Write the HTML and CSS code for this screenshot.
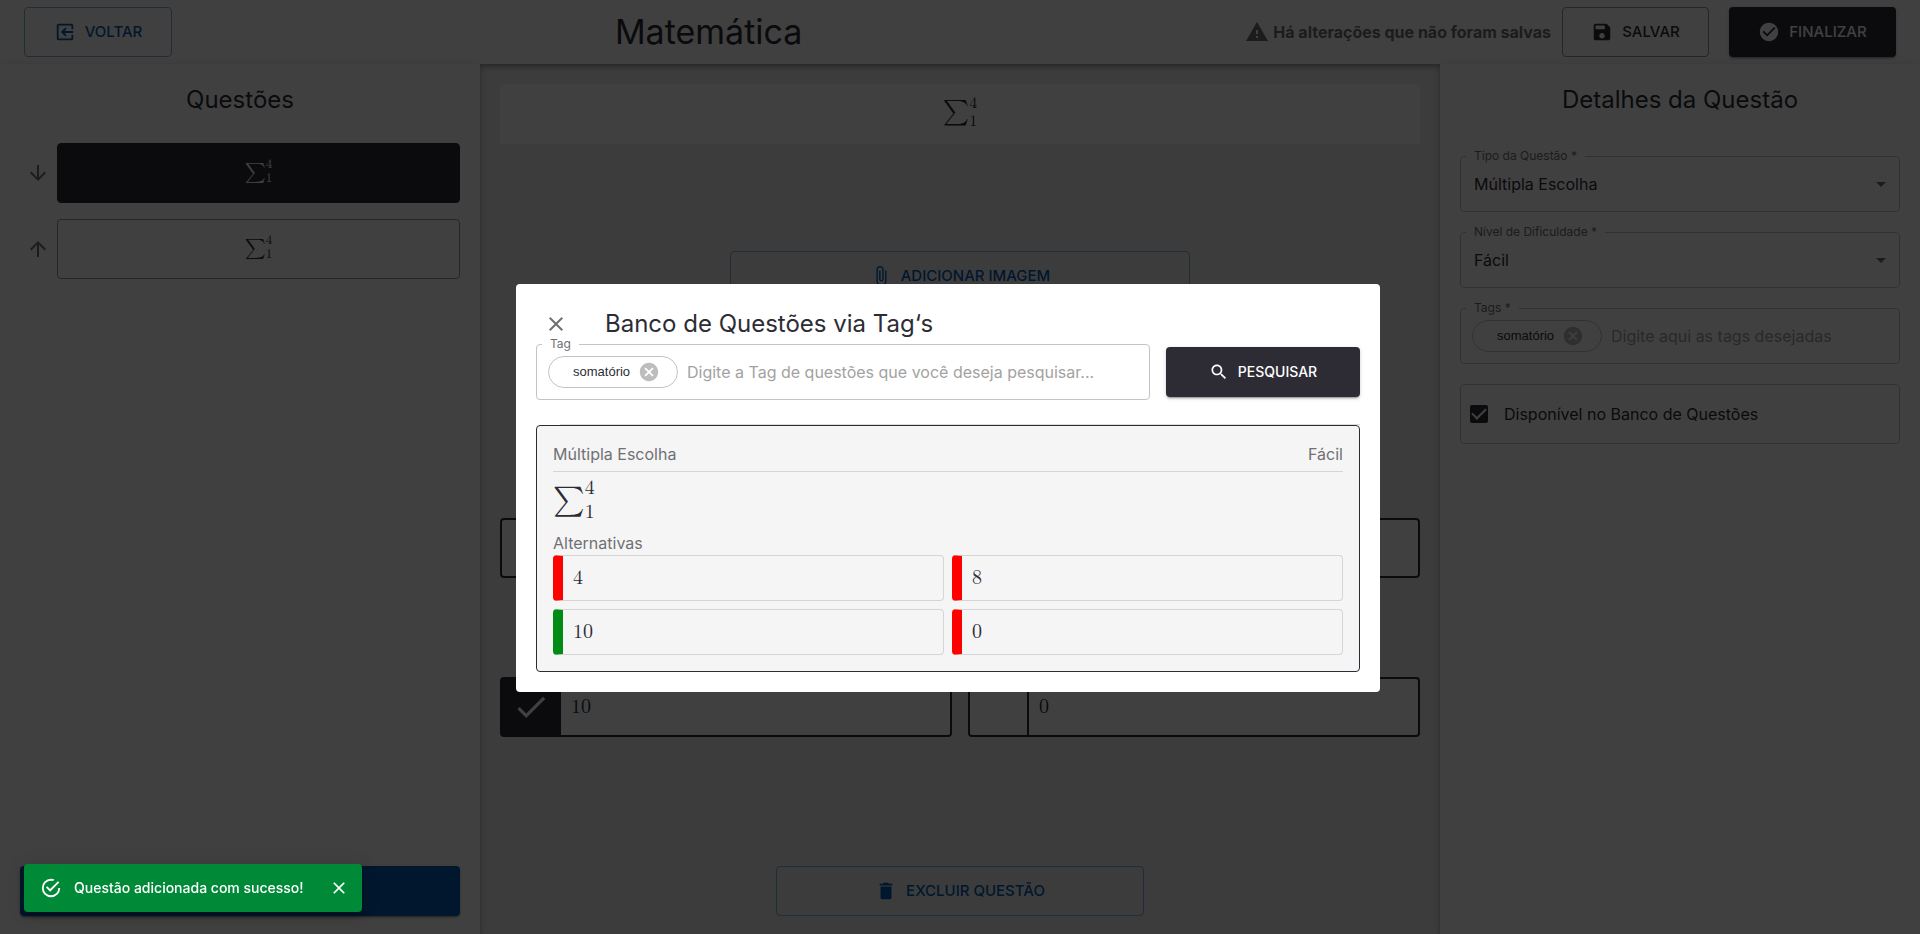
FILE: index.html
```html
<!DOCTYPE html>
<html lang="pt-BR">
<head>
<meta charset="utf-8">
<meta name="viewport" content="width=device-width, initial-scale=1">
<title>Matemática</title>
<link rel="stylesheet" href="styles.css">
</head>
<body>
<div class="app">
  <header class="topbar">
    <button type="button" class="btn btn-outline-blue btn-back">
      <svg class="icon" viewBox="0 0 24 24"><path transform="matrix(-1 0 0 1 24 0)" d="M10.090 15.590 11.500 17l5-5-5-5-1.410 1.410L12.670 11H3v2h9.670l-2.580 2.590zM19 3H5a2 2 0 0 0-2 2v4h2V5h14v14H5v-4H3v4a2 2 0 0 0 2 2h14a2 2 0 0 0 2-2V5a2 2 0 0 0-2-2z"/></svg>
      VOLTAR
    </button>
    <h1 class="topbar-title">Matemática</h1>
    <div class="topbar-actions">
      <p class="unsaved">
        <svg class="icon icon-lg" viewBox="0 0 24 24"><path d="M1 21h22L12 2 1 21zm12-3h-2v-2h2v2zm0-4h-2v-4h2v4z"/></svg>
        Há alterações que não foram salvas
      </p>
      <button type="button" class="btn btn-outline-dark btn-save">
        <svg class="icon" viewBox="0 0 24 24"><path d="M17 3H5c-1.110 0-2 .9-2 2v14c0 1.100.89 2 2 2h14c1.100 0 2-.9 2-2V7l-4-4zm-5 16c-1.660 0-3-1.340-3-3s1.340-3 3-3 3 1.340 3 3-1.340 3-3 3zm3-10H5V5h10v4z"/></svg>
        SALVAR
      </button>
      <button type="button" class="btn btn-dark btn-finish">
        <svg class="icon" viewBox="0 0 24 24"><path d="M12 2C6.480 2 2 6.480 2 12s4.480 10 10 10 10-4.480 10-10S17.520 2 12 2zm-2 15-5-5 1.410-1.410L10 14.170l7.590-7.590L19 8l-9 9z"/></svg>
        FINALIZAR
      </button>
    </div>
  </header>

  <div class="columns">
    <aside class="panel questions">
      <h2 class="panel-title">Questões</h2>
      <ul class="question-list">
        <li class="question-row">
          <button type="button" class="move" aria-label="Mover para baixo"><svg class="icon icon-lg" viewBox="0 0 24 24"><path d="m20 12-1.410-1.410L13 16.170V4h-2v12.170l-5.580-5.590L4 12l8 8 8-8z"/></svg></button>
          <button type="button" class="question-card question-card-active"><span class="sum sum-sm">∑<span class="limits"><span>4</span><span>1</span></span></span></button>
        </li>
        <li class="question-row">
          <button type="button" class="move" aria-label="Mover para cima"><svg class="icon icon-lg" viewBox="0 0 24 24"><path d="m4 12 1.410 1.410L11 7.830V20h2V7.830l5.580 5.590L20 12l-8-8-8 8z"/></svg></button>
          <button type="button" class="question-card"><span class="sum sum-sm">∑<span class="limits"><span>4</span><span>1</span></span></span></button>
        </li>
      </ul>
      <button type="button" class="btn btn-blue btn-add" aria-label="Adicionar questão"></button>
    </aside>

    <main class="editor">
      <div class="statement"><span class="sum sum-md">∑<span class="limits"><span>4</span><span>1</span></span></span></div>
      <div class="editor-image">
        <button type="button" class="btn btn-outline-blue btn-image">
          <svg class="icon" viewBox="0 0 24 24"><path d="M16.500 6v11.500c0 2.210-1.790 4-4 4s-4-1.790-4-4V5c0-1.380 1.120-2.500 2.500-2.500s2.500 1.120 2.500 2.500v10.500c0 .55-.45 1-1 1s-1-.45-1-1V6H10v9.500c0 1.380 1.120 2.500 2.500 2.500s2.500-1.120 2.500-2.500V5c0-2.210-1.790-4-4-4S7 2.790 7 5v12.500c0 3.040 2.460 5.500 5.500 5.500s5.500-2.460 5.500-5.500V6h-1.500z"/></svg>
          ADICIONAR IMAGEM
        </button>
      </div>
      <div class="choices">
        <div class="choice"><span class="choice-mark"></span><span class="choice-value">4</span></div>
        <div class="choice"><span class="choice-mark"></span><span class="choice-value">8</span></div>
        <div class="choice choice-right"><span class="choice-mark"><svg class="icon icon-xl" viewBox="0 0 24 24"><path d="M9 16.170 4.830 12l-1.420 1.410L9 19 21 7l-1.410-1.410L9 16.170z"/></svg></span><span class="choice-value">10</span></div>
        <div class="choice"><span class="choice-mark"></span><span class="choice-value">0</span></div>
      </div>
      <button type="button" class="btn btn-outline-blue btn-delete">
        <svg class="icon" viewBox="0 0 24 24"><path d="M6 19c0 1.100.9 2 2 2h8c1.100 0 2-.9 2-2V7H6v12zM19 4h-3.500l-1-1h-5l-1 1H5v2h14V4z"/></svg>
        EXCLUIR QUESTÃO
      </button>
    </main>

    <aside class="panel details">
      <h2 class="panel-title">Detalhes da Questão</h2>
      <div class="fields">
        <fieldset class="field">
          <legend><label for="tipo">Tipo da Questão *</label></legend>
          <select id="tipo" class="select"><option>Múltipla Escolha</option></select>
          <svg class="icon icon-lg select-arrow" viewBox="0 0 24 24"><path d="m7 10 5 5 5-5z"/></svg>
        </fieldset>
        <fieldset class="field">
          <legend><label for="nivel">Nível de Dificuldade *</label></legend>
          <select id="nivel" class="select"><option>Fácil</option></select>
          <svg class="icon icon-lg select-arrow" viewBox="0 0 24 24"><path d="m7 10 5 5 5-5z"/></svg>
        </fieldset>
        <fieldset class="field field-tags">
          <legend><label for="tags">Tags *</label></legend>
          <span class="chip">somatório<svg class="icon chip-x" viewBox="0 0 24 24"><path d="M12 2C6.470 2 2 6.470 2 12s4.470 10 10 10 10-4.470 10-10S17.530 2 12 2zm5 13.590L15.590 17 12 13.410 8.410 17 7 15.590 10.590 12 7 8.410 8.410 7 12 10.590 15.590 7 17 8.410 13.410 12 17 15.590z"/></svg></span>
          <input id="tags" class="input" type="text" placeholder="Digite aqui as tags desejadas">
        </fieldset>
        <label class="bank"><input type="checkbox" class="check" checked><span>Disponível no Banco de Questões</span></label>
      </div>
    </aside>
  </div>
</div>

<div class="backdrop">
  <section class="dialog" role="dialog" aria-modal="true" aria-labelledby="dialog-title">
    <div class="dialog-head">
      <button type="button" class="close" aria-label="Fechar"><svg class="icon icon-lg" viewBox="0 0 24 24"><path d="M19 6.410 17.590 5 12 10.590 6.410 5 5 6.410 10.590 12 5 17.590 6.410 19 12 13.410 17.590 19 19 17.590 13.410 12z"/></svg></button>
      <h2 id="dialog-title" class="dialog-title">Banco de Questões via Tag‘s</h2>
    </div>
    <form class="search">
      <fieldset class="field field-tags">
        <legend><label for="busca">Tag</label></legend>
        <span class="chip">somatório<svg class="icon chip-x" viewBox="0 0 24 24"><path d="M12 2C6.470 2 2 6.470 2 12s4.470 10 10 10 10-4.470 10-10S17.530 2 12 2zm5 13.590L15.590 17 12 13.410 8.410 17 7 15.590 10.590 12 7 8.410 8.410 7 12 10.590 15.590 7 17 8.410 13.410 12 17 15.590z"/></svg></span>
        <input id="busca" class="input" type="text" placeholder="Digite a Tag de questões que você deseja pesquisar...">
      </fieldset>
      <button type="button" class="btn btn-dark btn-search">
        <svg class="icon icon-sm" viewBox="0 0 24 24"><path d="M15.500 14h-.79l-.28-.27C15.410 12.590 16 11.110 16 9.500 16 5.910 13.090 3 9.500 3S3 5.910 3 9.500 5.910 16 9.500 16c1.610 0 3.090-.59 4.230-1.570l.27.28v.79l5 4.990L20.490 19l-4.990-5zm-6 0C7.010 14 5 11.990 5 9.500S7.010 5 9.500 5 14 7.010 14 9.500 11.990 14 9.500 14z"/></svg>
        PESQUISAR
      </button>
    </form>
    <hr class="rule">
    <article class="result">
      <div class="result-head"><span>Múltipla Escolha</span><span>Fácil</span></div>
      <div class="result-statement"><span class="sum sum-lg">∑<span class="limits"><span>4</span><span>1</span></span></span></div>
      <p class="result-label">Alternativas</p>
      <ul class="answers">
        <li class="answer">4</li>
        <li class="answer">8</li>
        <li class="answer answer-right">10</li>
        <li class="answer">0</li>
      </ul>
    </article>
  </section>
</div>

<div class="toast" role="alert">
  <svg class="icon icon-toast" viewBox="0 0 24 24"><path d="M20 12a8 8 0 0 1-8 8 8 8 0 0 1-8-8 8 8 0 0 1 8-8c.76 0 1.500.11 2.200.31l1.570-1.570A9.822 9.822 0 0 0 12 2 10 10 0 0 0 2 12a10 10 0 0 0 10 10 10 10 0 0 0 10-10M7.910 10.080 6.500 11.500 11 16 21 6l-1.410-1.420L11 13.170z"/></svg>
  <span class="toast-text">Questão adicionada com sucesso!</span>
  <button type="button" class="toast-close" aria-label="Fechar aviso"><svg class="icon icon-sm" viewBox="0 0 24 24"><path d="M19 6.410 17.590 5 12 10.590 6.410 5 5 6.410 10.590 12 5 17.590 6.410 19 12 13.410 17.590 19 19 17.590 13.410 12z"/></svg></button>
</div>
</body>
</html>
```
FILE: styles.css
```css
:root {
  --ink: #2d2c35;
  --blue: #005cb2;
  --blue-line: #80aed6;
  --muted: #707074;
  --line: #c4c4c4;
  --math: "Latin Modern Math", "Liberation Serif", serif;
}

* { box-sizing: border-box; }

body {
  margin: 0;
  font-family: Inter, sans-serif;
  font-size: 16px;
  line-height: 24px;
  color: var(--ink);
  background: #fff;
}

h1, h2, p, ul { margin: 0; padding: 0; font-weight: 400; list-style: none; }

button, input, select { font: inherit; color: inherit; }

.icon { width: 22px; height: 22px; fill: currentColor; flex: none; }
.icon-sm { width: 20px; height: 20px; }
.icon-lg { width: 24px; height: 24px; }
.icon-xl { width: 38px; height: 38px; }

.app { display: flex; flex-direction: column; min-height: 100vh; }

/* Buttons */
.btn {
  display: flex;
  align-items: center;
  justify-content: center;
  gap: 9px;
  height: 50px;
  padding: 0 24px;
  border: 1px solid transparent;
  border-radius: 4px;
  background: transparent;
  font-size: 15px;
  font-weight: 500;
}
.btn-outline-blue { color: var(--blue); border-color: var(--blue-line); }
.btn-outline-dark { border-color: #96959a; }
.btn-dark { background: var(--ink); color: #fff; }
.btn-blue { background: var(--blue); }
.btn-dark, .btn-blue {
  box-shadow: 0 3px 1px -2px rgba(0,0,0,.2), 0 2px 2px rgba(0,0,0,.14), 0 1px 5px rgba(0,0,0,.12);
}
.btn-back { width: 148px; }
.btn-save { width: 147px; }
.btn-finish { width: 167px; }

/* Top bar */
.topbar {
  position: relative;
  display: flex;
  align-items: center;
  justify-content: space-between;
  height: 64px;
  padding: 0 24px;
  background: #fff;
  box-shadow: 0 2px 4px -1px rgba(0,0,0,.2), 0 4px 5px rgba(0,0,0,.14), 0 1px 10px rgba(0,0,0,.12);
}
.topbar-title { font-size: 34px; line-height: 42px; }
.topbar-actions { display: flex; align-items: center; gap: 20px; }
.unsaved {
  display: flex;
  align-items: center;
  gap: 4px;
  margin-right: -9px;
  font-weight: 700;
  color: var(--muted);
}

/* Columns */
.columns { flex: 1; display: grid; grid-template-columns: 1fr 2fr 1fr; }
.panel {
  position: relative;
  display: flex;
  flex-direction: column;
  padding: 20px 20px 18px;
  background: #fff;
  box-shadow: 0 2px 4px -1px rgba(0,0,0,.2), 0 4px 5px rgba(0,0,0,.14), 0 1px 10px rgba(0,0,0,.12);
}
.panel-title { font-size: 24px; line-height: 32px; text-align: center; }

.question-list { display: flex; flex-direction: column; gap: 16px; margin-top: 27px; }
.question-row { display: flex; align-items: center; }
.move {
  display: flex;
  width: 37px;
  padding: 0 6px;
  border: 0;
  background: none;
  color: var(--muted);
}
.question-card {
  flex: 1;
  display: flex;
  align-items: center;
  justify-content: center;
  height: 60px;
  padding-bottom: 3px;
  border: 1px solid #96959a;
  border-radius: 4px;
  background: #fff;
}
.question-card-active { background: var(--ink); border-color: var(--ink); color: #fff; }
.btn-add { margin-top: auto; }

/* Sums */
.sum { display: inline-flex; align-items: center; font-family: var(--math); }
.limits { display: flex; flex-direction: column; justify-content: space-between; }
.sum-sm { font-size: 20px; }
.sum-sm .limits { font-size: 13px; line-height: 14px; }
.sum-md { font-size: 25px; }
.sum-md .limits { font-size: 16px; line-height: 18px; }
.sum-lg { font-size: 30px; line-height: 40px; }
.sum-lg .limits { font-size: 20px; line-height: 24px; }

/* Editor */
.editor {
  display: flex;
  flex-direction: column;
  padding: 20px 20px 18px;
  background: #f0f0f4;
}
.statement {
  display: flex;
  align-items: center;
  justify-content: center;
  height: 60px;
  padding-bottom: 4px;
  background: #fff;
}
.editor-image { display: flex; justify-content: center; margin-top: 107px; }
.btn-image { width: 50%; }
.choices {
  display: grid;
  grid-template-columns: 1fr 1fr;
  gap: 99px 16px;
  margin-top: 217px;
}
.choice {
  display: flex;
  height: 60px;
  border: 2px solid var(--ink);
  border-radius: 4px;
  background: #fff;
  font-family: var(--math);
  font-size: 20px;
}
.choice-mark {
  display: flex;
  align-items: center;
  justify-content: center;
  width: 59px;
  border-right: 2px solid var(--ink);
}
.choice-right .choice-mark { background: var(--ink); color: #fff; }
.choice-value { padding: 16px 10px; }
.btn-delete { width: 40%; margin: auto auto 0; }

/* Fields */
.fields { display: flex; flex-direction: column; gap: 14px; margin-top: 34px; }
.field {
  position: relative;
  display: flex;
  align-items: center;
  height: 62px;
  min-width: 0;
  margin: 0;
  padding: 0 13px 6px;
  border: 1px solid var(--line);
  border-radius: 4px;
}
.field legend {
  height: 12px;
  margin-left: -8px;
  padding: 0 8px;
  font-size: 12px;
  line-height: 12px;
  color: var(--muted);
}
.select {
  flex: 1;
  height: 44px;
  padding: 0;
  border: 0;
  background: none;
  appearance: none;
  outline: none;
}
.select-arrow { position: absolute; right: 6px; top: 10px; color: var(--muted); pointer-events: none; }
.field-tags { padding-left: 11px; gap: 9px; }
.field-tags legend { margin-left: -6px; }
.chip {
  display: flex;
  align-items: center;
  justify-content: space-between;
  flex: none;
  width: 130px;
  height: 32px;
  padding: 0 17px 0 24px;
  border: 1px solid var(--line);
  border-radius: 16px;
  font-family: "Liberation Sans", Arial, sans-serif;
  font-size: 13px;
}
.chip-x { color: #bdbdbd; }
.input { flex: 1; min-width: 0; height: 44px; padding: 0; border: 0; background: none; outline: none; }
.input::placeholder { color: #a2a2a2; opacity: 1; }
.bank {
  display: flex;
  align-items: center;
  gap: 16px;
  height: 60px;
  margin-top: 6px;
  padding: 0 9px;
  border: 1px solid var(--line);
  border-radius: 4px;
}
.check {
  appearance: none;
  display: grid;
  place-items: center;
  width: 18px;
  height: 18px;
  margin: 0;
  border-radius: 2px;
  background: var(--ink);
}
.check::before {
  content: "";
  width: 12px;
  height: 6px;
  margin-bottom: 4px;
  border: solid #fff;
  border-width: 0 0 2px 2px;
  transform: rotate(-45deg);
}

/* Dialog */
.backdrop {
  position: fixed;
  inset: 0;
  display: flex;
  align-items: center;
  justify-content: center;
  padding: 74px 24px 32px 0;
  background: rgba(0,0,0,.75);
}
.dialog {
  width: 45vw;
  min-width: 640px;
  padding: 20px;
  border-radius: 4px;
  background: #fff;
}
.dialog-head { display: flex; align-items: center; gap: 37px; padding: 6px 8px 0; }
.close { display: flex; padding: 0; border: 0; background: none; color: var(--muted); }
.dialog-title { font-size: 24px; line-height: 28px; }
.search { display: flex; align-items: center; gap: 16px; }
.search .field { flex: 1; }
.btn-search { width: 194px; margin-top: 6px; font-size: 14px; }
.rule { height: 1px; margin: 24px 0 0 24px; border: 0; background: #dcdcdc; }
.result {
  padding: 16px;
  border: 1px solid var(--ink);
  border-radius: 4px;
  background: #f5f5f5;
}
.result-head {
  display: flex;
  justify-content: space-between;
  padding-bottom: 5px;
  border-bottom: 1px solid #d5d5d5;
  color: var(--muted);
}
.result-statement { display: flex; align-items: center; height: 59px; padding-bottom: 3px; }
.result-label { color: var(--muted); }
.answers { display: grid; grid-template-columns: 1fr 1fr; gap: 8px; }
.answer {
  height: 46px;
  padding: 10px;
  border: 1px solid #d5d5d5;
  border-left: 10px solid #f00;
  border-radius: 4px;
  font-family: var(--math);
  font-size: 20px;
}
.answer-right { border-left-color: #008b14; }

/* Toast */
.toast {
  position: fixed;
  left: 24px;
  bottom: 22px;
  display: flex;
  align-items: center;
  height: 48px;
  padding: 0 13px 0 16px;
  border-radius: 4px;
  background: #008a38;
  color: #fff;
  font-size: 14px;
  font-weight: 500;
  box-shadow: 0 3px 5px -1px rgba(0,0,0,.2), 0 6px 10px rgba(0,0,0,.14), 0 1px 18px rgba(0,0,0,.12);
}
.icon-toast { margin-right: 12px; }
.toast-close { display: flex; margin-left: 25px; padding: 0; border: 0; background: none; }
```
